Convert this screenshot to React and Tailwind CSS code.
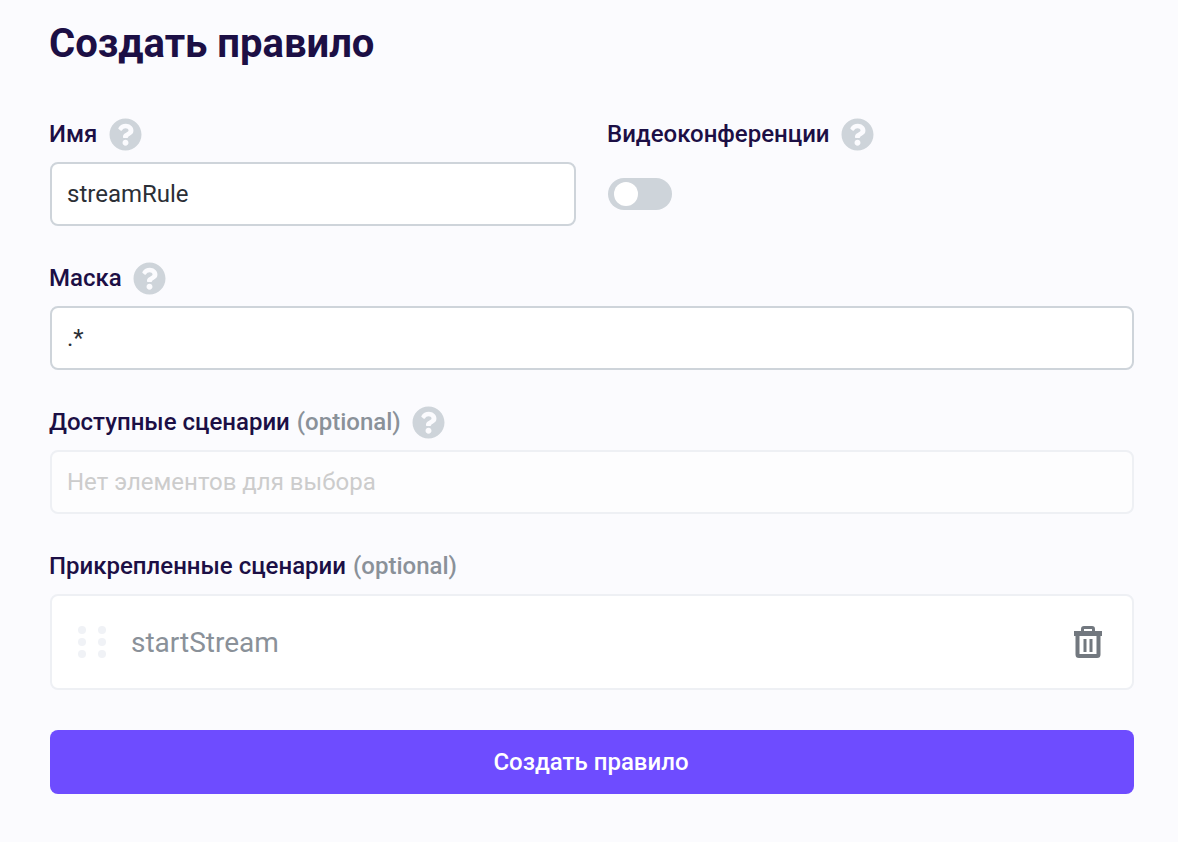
import React from 'react';
import { FaQuestionCircle } from 'react-icons/fa';

const Hint = () => <FaQuestionCircle className="w-[33px] h-[33px] -m-[0.5px] text-[#ced4da] shrink-0" />;

const Label = ({ children, optional, hint }) => (
    <div className="flex items-center h-8 gap-3 -ml-px text-2xl leading-8 font-medium text-[#1c0f45]">
        <span>
            {children}
            {optional && <span className="ml-px text-[#8a9199]"> (optional)</span>}
        </span>
        {hint && <Hint />}
    </div>
);

const TrashIcon = () => (
    <svg width="28" height="32" viewBox="0 0 28 32" fill="none" className="shrink-0">
        <path d="M8.5 6V3a1.5 1.5 0 0 1 1.5-1.5h8A1.5 1.5 0 0 1 19.5 3v3" stroke="#72787f" strokeWidth="3" />
        <rect x="0" y="5" width="28" height="5" fill="#72787f" />
        <path d="M3.5 8v20.5A1.5 1.5 0 0 0 5 30h18a1.5 1.5 0 0 0 1.5-1.5V8" stroke="#72787f" strokeWidth="4" />
        <rect x="9.5" y="13" width="3" height="13" fill="#72787f" />
        <rect x="15.5" y="13" width="3" height="13" fill="#72787f" />
    </svg>
);

const DragHandle = () => (
    <div className="grid grid-cols-2 gap-x-3 gap-y-1 w-[28px] shrink-0">
        {[0, 1, 2, 3, 4, 5].map((i) => (
            <span key={i} className="w-2 h-2 rounded-full bg-[#f0f2f6]" />
        ))}
    </div>
);

const App = () => {
    return (
        <div className="min-h-screen bg-[#fbfbfe] pl-[50px] pr-[44px] pt-5 font-['Roboto',sans-serif] antialiased overflow-hidden">
            <h1 className="-ml-px text-[40px] leading-12 font-bold text-[#1c0f45]">Создать правило</h1>

            <div className="grid grid-cols-2 gap-8 mt-[50px]">
                <div>
                    <Label hint>Имя</Label>
                    <div className="mt-3 h-16 flex items-center pl-[15px] pr-4 bg-white border-2 border-[#ced4da] rounded-lg text-2xl text-[#2b2f36]">
                        streamRule
                    </div>
                </div>
                <div>
                    <Label hint>Видеоконференции</Label>
                    <div className="mt-7 w-16 h-8 rounded-full bg-[#ced4da] flex items-center pl-1.5">
                        <span className="w-6 h-6 rounded-full bg-white" />
                    </div>
                </div>
            </div>

            <div className="mt-9">
                <Label hint>Маска</Label>
                <div className="mt-3 h-16 flex items-center pl-[15px] pr-4 bg-white border-2 border-[#ced4da] rounded-lg text-2xl text-[#2b2f36]">
                    .*
                </div>
            </div>

            <div className="mt-9">
                <Label optional hint>Доступные сценарии</Label>
                <div className="mt-3 h-16 flex items-center pl-[15px] pr-4 bg-[#fdfdfe] border-2 border-[#eef0f4] rounded-lg text-2xl text-[#cccccc]">
                    Нет элементов для выбора
                </div>
            </div>

            <div className="mt-9">
                <Label optional>Прикрепленные сценарии</Label>
                <div className="mt-3 h-[96px] flex items-center pl-[26px] pr-[30px] bg-white border-2 border-[#eef0f4] rounded-lg">
                    <DragHandle />
                    <span className="ml-[25px] pt-0.5 text-[28px] text-[#8a9199] flex-1">startStream</span>
                    <TrashIcon />
                </div>
            </div>

            <button className="mt-10 pr-0.5 w-full h-16 rounded-lg bg-[#6e4cff] text-white text-2xl font-medium">
                Создать правило
            </button>
        </div>
    );
};

export default App;
